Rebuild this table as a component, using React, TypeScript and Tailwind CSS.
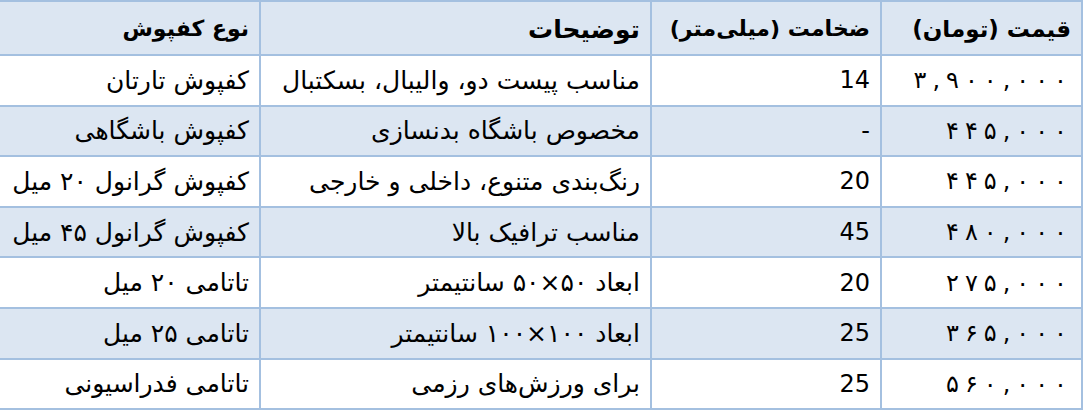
import React from "react";

const rows: [string, string, string, string][] = [
  ["کفپوش تارتان", "مناسب پیست دو، والیبال، بسکتبال", "14", "۳,۹۰۰,۰۰۰"],
  ["کفپوش باشگاهی", "مخصوص باشگاه بدنسازی", "-", "۴۴۵,۰۰۰"],
  ["کفپوش گرانول ۲۰ میل", "رنگ‌بندی متنوع، داخلی و خارجی", "20", "۴۴۵,۰۰۰"],
  ["کفپوش گرانول ۴۵ میل", "مناسب ترافیک بالا", "45", "۴۸۰,۰۰۰"],
  ["تاتامی ۲۰ میل", "ابعاد ۵۰×۵۰ سانتیمتر", "20", "۲۷۵,۰۰۰"],
  ["تاتامی ۲۵ میل", "ابعاد ۱۰۰×۱۰۰ سانتیمتر", "25", "۳۶۵,۰۰۰"],
  ["تاتامی فدراسیونی", "برای ورزش‌های رزمی", "25", "۵۶۰,۰۰۰"],
];

const cell =
  "border-2 border-[#a4c0e0] text-right px-[10px] align-middle leading-none whitespace-nowrap";

function Price({ value }: { value: string }) {
  return (
    <span dir="ltr" className="inline-flex gap-[6px]">
      {Array.from(value).map((c, i) => (
        <span key={i}>{c}</span>
      ))}
    </span>
  );
}

export default function App() {
  return (
    <div className="w-[1083px] h-[411px] bg-white overflow-hidden" dir="rtl">
      <table
        className="w-[1083px] border-collapse table-fixed text-black"
        style={{ fontFamily: '"DejaVu Sans", Tahoma, sans-serif' }}
      >
        <colgroup>
          <col className="w-[201px]" />
          <col className="w-[230px]" />
          <col className="w-[391px]" />
          <col className="w-[261px]" />
        </colgroup>
        <thead>
          <tr className="h-[54px] bg-[#dce6f2]">
            <th className={`${cell} font-bold text-[23px] pt-[2px]`}>قیمت (تومان)</th>
            <th className={`${cell} font-bold text-[22px] pt-[2px]`}>ضخامت (میلی‌متر)</th>
            <th className={`${cell} font-bold text-[25px] pt-[2px]`}>توضیحات</th>
            <th className={`${cell} font-bold text-[22px] pt-[2px]`}>نوع کفپوش</th>
          </tr>
        </thead>
        <tbody>
          {rows.map((r, i) => (
            <tr
              key={i}
              className={i % 2 === 1 ? "h-[50.6px] bg-[#dce6f2]" : "h-[50.6px] bg-white"}
            >
              <td className={`${cell} text-[24px] pr-[14px]`}>
                <Price value={r[3]} />
              </td>
              <td className={`${cell} text-[24px]`}>{r[2]}</td>
              <td className={`${cell} text-[25px]`}>{r[1]}</td>
              <td className={`${cell} text-[25px]`}>{r[0]}</td>
            </tr>
          ))}
        </tbody>
      </table>
    </div>
  );
}
